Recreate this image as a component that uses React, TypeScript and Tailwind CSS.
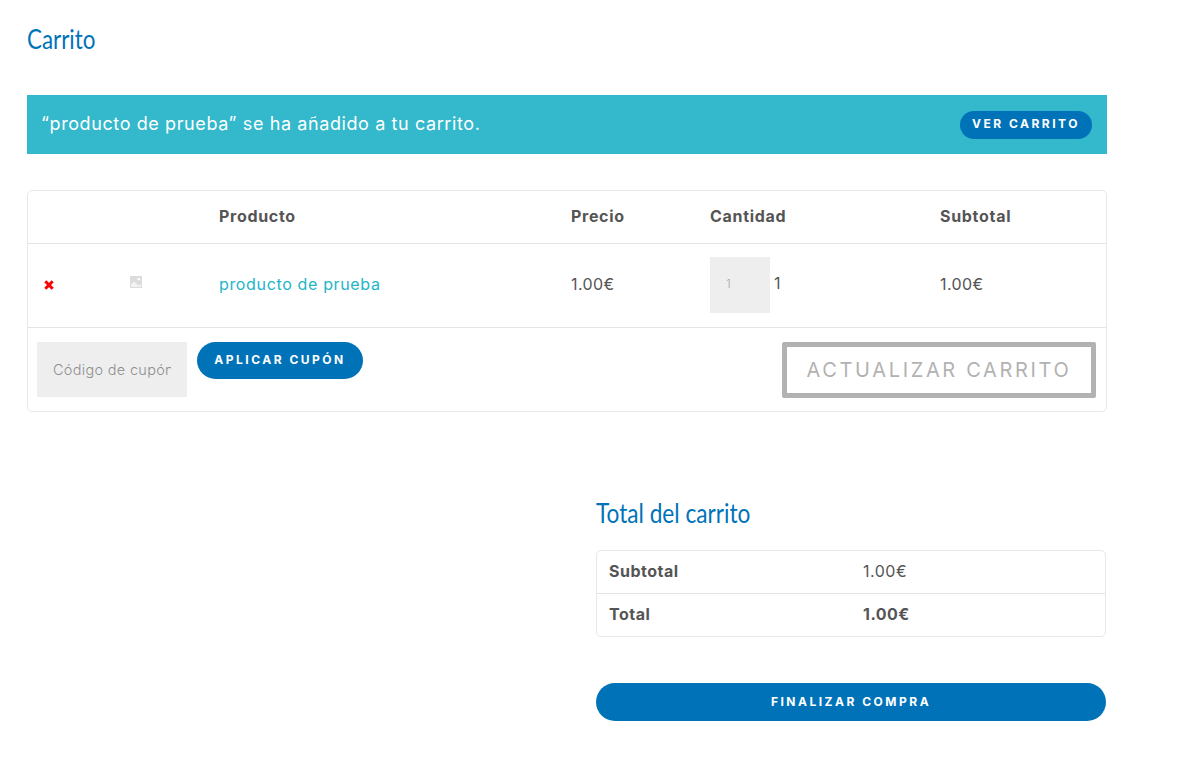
const sans = "font-['Inter','Noto_Sans',sans-serif]";
const cols = "grid grid-cols-[87px_89px_352px_139px_230px_1fr] items-center";

function BrokenImage() {
  return (
    <svg width="12" height="12" viewBox="0 0 12 12" aria-hidden="true">
      <path d="M0 0H12V12H0Z" fill="#dcdcdc" />
      <path d="M1 11V8L4 5.5 8.5 9.5 11 8V11Z" fill="#f2f2f2" />
      <circle cx="8.8" cy="3.2" r="1.3" fill="#fff" />
    </svg>
  );
}

function RemoveIcon() {
  return (
    <svg width="10" height="10" viewBox="0 0 10 10" aria-hidden="true">
      <path d="M1.3 1.3 8.7 8.7M8.7 1.3 1.3 8.7" stroke="#ff0000" strokeWidth="3" />
    </svg>
  );
}

export default function App() {
  return (
    <div className={`${sans} min-h-[767px] w-[1185px] bg-white px-[27px] pt-[23px] text-[#555555]`}>
      <div className="w-[1080px]">
        <h1 className="origin-left scale-x-[0.86] font-['Lato',sans-serif] text-[26px] leading-[33px] text-[#0073b8]">Carrito</h1>

        <div className="mt-[39px] flex h-[59px] items-center justify-between bg-[#33b8cc] pl-[14px] pr-[15px] text-white">
          <span className="pb-[2px] text-[18px] tracking-[0.6px]">“producto de prueba” se ha añadido a tu carrito.</span>
          <span className="flex h-[28px] w-[132px] items-center justify-center rounded-full bg-[#0073b8] pb-[1px] text-[12px] font-bold tracking-[2.5px]">VER CARRITO</span>
        </div>

        <div className="mt-[36px] h-[222px] rounded-[5px] border border-[#e8e8e8]">
          <div className={`${cols} h-[53px] border-b border-[#e4e4e4] pb-[2px] text-[16px] font-bold tracking-[0.7px]`}>
            <div /><div />
            <div className="pl-[15px]">Producto</div>
            <div className="pl-[15px]">Precio</div>
            <div className="pl-[15px]">Cantidad</div>
            <div className="pl-[15px]">Subtotal</div>
          </div>
          <div className={`${cols} h-[84px] border-b border-[#e4e4e4] text-[16px] tracking-[0.4px]`}>
            <div className="flex pb-[1px] pl-[16px]"><RemoveIcon /></div>
            <div className="flex pb-[7px] pl-[15px]"><BrokenImage /></div>
            <div className="pb-[4px] pl-[15px] tracking-[0.65px] text-[#22b5c8]">producto de prueba</div>
            <div className="pb-[4px] pl-[15px]">1.00€</div>
            <div className="flex items-start pb-[2px] pl-[15px]">
              <div className="flex h-[56px] w-[60px] items-center bg-[#eeeeee] pb-[1px] pl-[16px] text-[12px] font-light text-[#a8a8a8]">1</div>
              <span className="ml-[4px] mt-[16px] leading-[20px]">1</span>
            </div>
            <div className="pb-[4px] pl-[15px]">1.00€</div>
          </div>
          <div className="flex items-start justify-between pl-[9px] pr-[10px] pt-[14px]">
            <div className="flex items-start gap-[10px]">
              <div className="flex h-[55px] w-[150px] items-center bg-[#eeeeee] pl-[16px] text-[14.5px] font-light tracking-[0.3px] text-[#8f8f8f]">
                <span className="w-[118px] overflow-hidden whitespace-nowrap">Código de cupón</span>
              </div>
              <span className="flex h-[37px] w-[166px] items-center justify-center rounded-full bg-[#0073b8] pb-[1px] text-[12px] font-bold tracking-[2.5px] text-white">APLICAR CUPÓN</span>
            </div>
            <span className="flex h-[56px] w-[314px] items-center justify-center rounded-[2px] border-[5px] border-[#b2b2b2] text-[20px] tracking-[2.65px] text-[#b2b2b2]">ACTUALIZAR CARRITO</span>
          </div>
        </div>

        <div className="ml-[569px] mt-[83px] w-[510px]">
          <h2 className="origin-left scale-x-[0.87] font-['Lato',sans-serif] text-[26px] leading-[36px] text-[#0073b8]">Total del carrito</h2>
          <div className="mt-[19px] rounded-[5px] border border-[#e8e8e8] text-[16px] tracking-[0.5px]">
            <div className="grid h-[43px] grid-cols-[254px_1fr] items-center border-b border-[#e4e4e4] pb-[2px] pl-[12px]">
              <b>Subtotal</b><span>1.00€</span>
            </div>
            <div className="grid h-[42px] grid-cols-[254px_1fr] items-center pb-[2px] pl-[12px] font-bold">
              <span>Total</span><span>1.00€</span>
            </div>
          </div>
          <div className="mt-[46px] flex h-[38px] items-center justify-center rounded-full bg-[#0073b8] text-[12px] font-bold tracking-[2.5px] text-white">FINALIZAR COMPRA</div>
        </div>
      </div>
    </div>
  );
}
